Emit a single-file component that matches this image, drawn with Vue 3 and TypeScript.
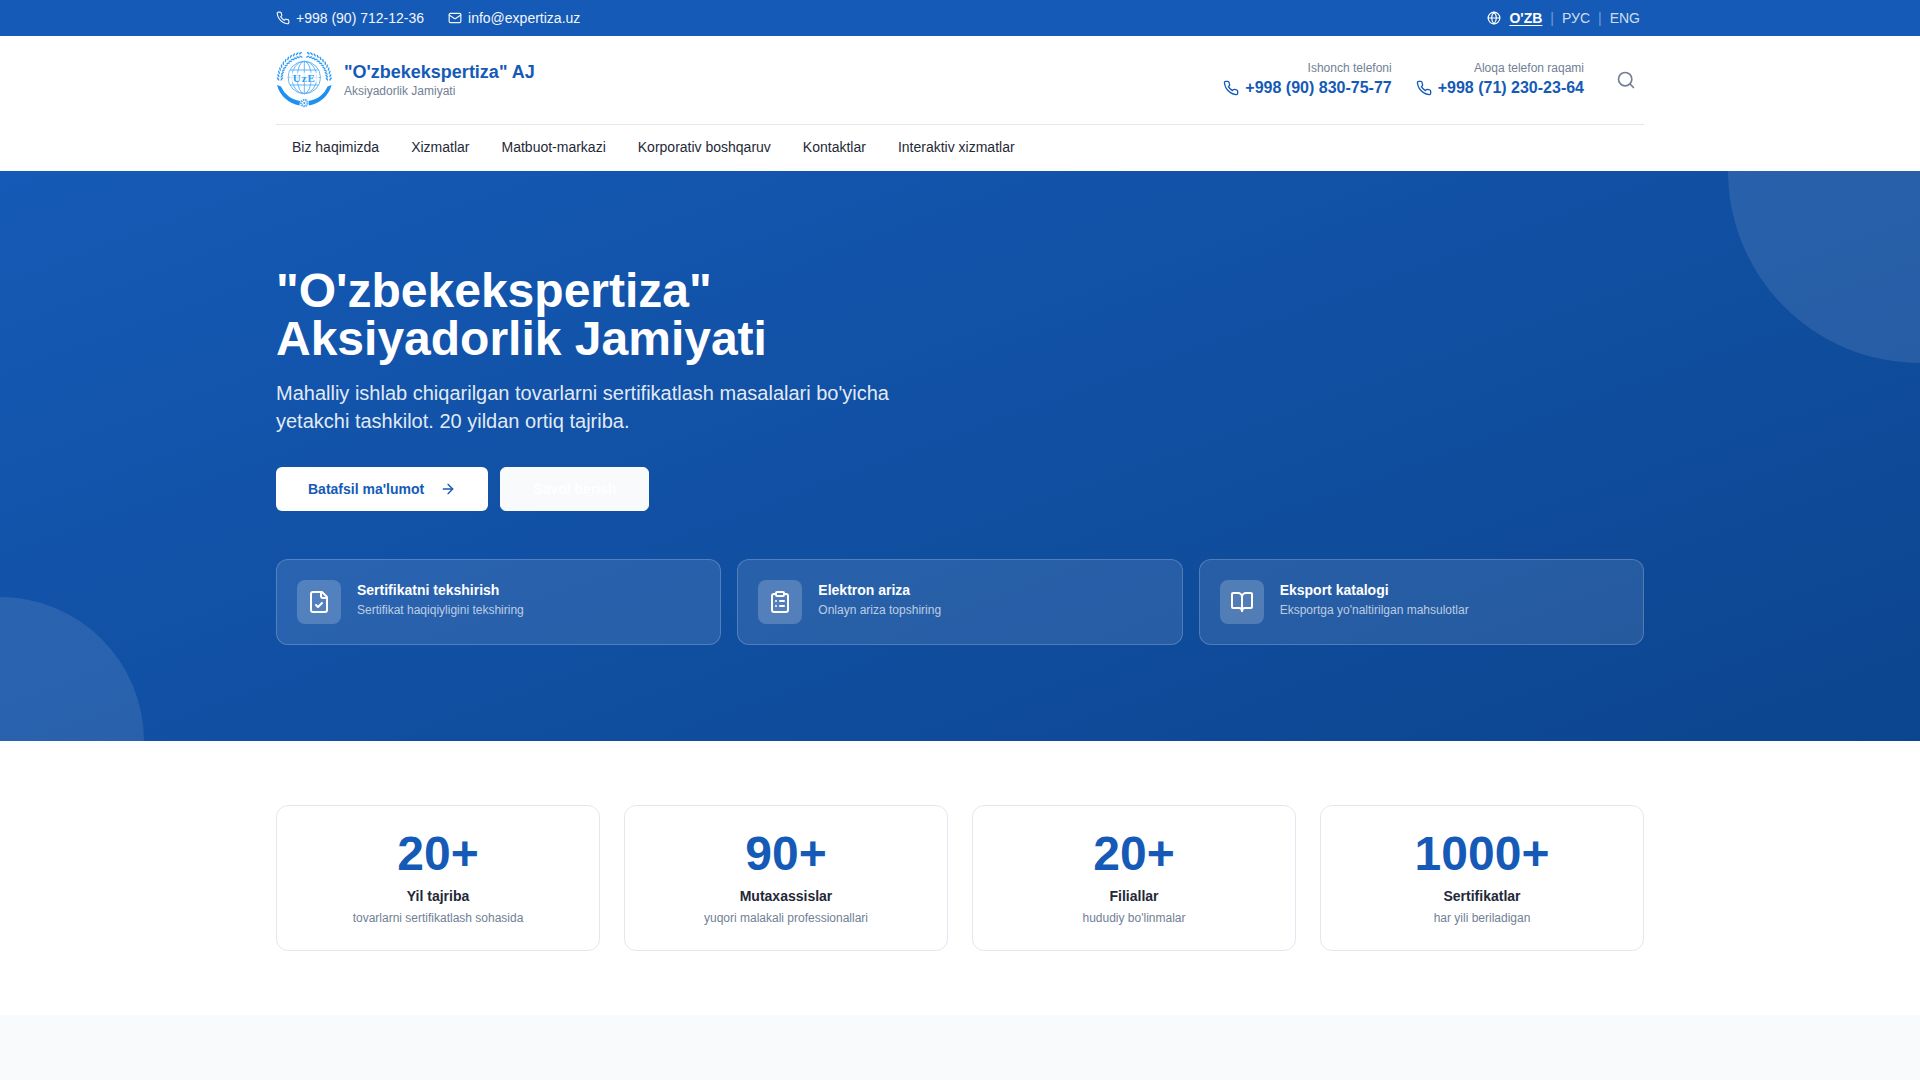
<template>
  <div class="topbar">
    <div class="container topbar__inner">
      <div class="topbar__contacts">
        <a class="topbar__link">
          <svg class="icon icon--sm" viewBox="0 0 24 24"><path :d="phonePath" /></svg>
          +998 (90) 712-12-36
        </a>
        <a class="topbar__link">
          <svg class="icon icon--sm" viewBox="0 0 24 24">
            <rect x="2" y="4" width="20" height="16" rx="2" />
            <path d="m22 7-8.97 5.7a1.94 1.94 0 0 1-2.06 0L2 7" />
          </svg>
          info@expertiza.uz
        </a>
      </div>
      <div class="lang">
        <svg class="icon icon--sm" viewBox="0 0 24 24">
          <circle cx="12" cy="12" r="10" />
          <path d="M12 2a14.5 14.5 0 0 0 0 20 14.5 14.5 0 0 0 0-20" />
          <path d="M2 12h20" />
        </svg>
        <button class="lang__btn lang__btn--active">O'ZB</button>
        <span class="lang__sep">|</span>
        <button class="lang__btn">РУС</button>
        <span class="lang__sep">|</span>
        <button class="lang__btn">ENG</button>
      </div>
    </div>
  </div>

  <header class="header">
    <div class="container">
      <div class="header__main">
        <div class="brand">
          <svg class="brand__logo" viewBox="0 0 56 56">
            <g fill="none" stroke="#55aef8" stroke-width="0.9">
              <circle cx="28.3" cy="25.5" r="16.2" />
              <ellipse cx="28.3" cy="25.5" rx="7" ry="16.2" />
              <ellipse cx="28.3" cy="25.5" rx="12.5" ry="16.2" />
              <path d="M28.3 9.3v32.4M14 18h28.6M14 33h28.6M12.5 25.5h31.6" />
            </g>
            <rect x="13.5" y="20.5" width="29.6" height="10" fill="#fff" opacity="0.75" />
            <text x="28.3" y="29.5" class="brand__mark">UzE</text>
            <path class="brand__arc" d="M1 33A28 28 0 0 0 23.5 53.5L24 49A23.5 23.5 0 0 1 5 34.5Z" />
            <path class="brand__arc" d="M55.6 33A28 28 0 0 1 33 53.5L32.6 49A23.5 23.5 0 0 0 51.6 34.5Z" />
            <g fill="#2f9bf5">
              <ellipse
                v-for="leaf in leaves"
                :key="leaf.id"
                :cx="leaf.x"
                :cy="leaf.y"
                rx="1.9"
                ry="0.75"
                :transform="`rotate(${leaf.angle} ${leaf.x} ${leaf.y})`"
              />
            </g>
            <circle cx="28.3" cy="51" r="3.2" fill="none" stroke="#5aaef5" stroke-width="2.2" stroke-dasharray="1.5 0.7" />
            <circle cx="28.3" cy="51" r="1" fill="#2f9bf5" />
          </svg>
          <div>
            <div class="brand__title">"O'zbekekspertiza" AJ</div>
            <div class="brand__sub">Aksiyadorlik Jamiyati</div>
          </div>
        </div>

        <div class="header__right">
          <div v-for="phone in phones" :key="phone.number" class="hotline">
            <div class="hotline__label">{{ phone.label }}</div>
            <div class="hotline__number">
              <svg class="icon" viewBox="0 0 24 24"><path :d="phonePath" /></svg>
              {{ phone.number }}
            </div>
          </div>
          <button class="search">
            <svg class="search__icon" viewBox="0 0 24 24">
              <circle cx="11" cy="11" r="8" />
              <path d="m21 21-4.3-4.3" />
            </svg>
          </button>
        </div>
      </div>

      <nav class="nav">
        <a v-for="item in navItems" :key="item" class="nav__item">{{ item }}</a>
      </nav>
    </div>
  </header>

  <section class="hero">
    <div class="hero__circle hero__circle--top"></div>
    <div class="hero__circle hero__circle--bottom"></div>
    <div class="container hero__inner">
      <div class="hero__text">
        <h1 class="hero__title">"O'zbekekspertiza" Aksiyadorlik Jamiyati</h1>
        <p class="hero__sub">Mahalliy ishlab chiqarilgan tovarlarni sertifikatlash masalalari bo'yicha yetakchi tashkilot. 20 yildan ortiq tajriba.</p>
        <div class="hero__buttons">
          <button class="btn btn--primary">
            Batafsil ma'lumot
            <svg class="icon" viewBox="0 0 24 24">
              <path d="M5 12h14" />
              <path d="m12 5 7 7-7 7" />
            </svg>
          </button>
          <button class="btn btn--ghost">Savol berish</button>
        </div>
      </div>

      <div class="hero__cards">
        <a v-for="card in cards" :key="card.title" class="service">
          <div class="service__icon">
            <svg viewBox="0 0 24 24">
              <rect v-if="card.rect" x="8" y="2" width="8" height="4" rx="1" />
              <path v-for="d in card.paths" :key="d" :d="d" />
            </svg>
          </div>
          <div>
            <div class="service__title">{{ card.title }}</div>
            <div class="service__sub">{{ card.sub }}</div>
          </div>
        </a>
      </div>
    </div>
  </section>

  <section class="stats">
    <div class="container stats__grid">
      <div v-for="stat in stats" :key="stat.label" class="stat">
        <div class="stat__value">{{ stat.value }}</div>
        <div class="stat__label">{{ stat.label }}</div>
        <div class="stat__desc">{{ stat.desc }}</div>
      </div>
    </div>
  </section>
</template>

<script setup lang="ts">
type ServiceCard = {
  title: string
  sub: string
  rect?: boolean
  paths: string[]
}

const phonePath =
  'M22 16.92v3a2 2 0 0 1-2.18 2 19.79 19.79 0 0 1-8.63-3.07 19.5 19.5 0 0 1-6-6 19.79 19.79 0 0 1-3.07-8.67A2 2 0 0 1 4.11 2h3a2 2 0 0 1 2 1.72 12.84 12.84 0 0 0 .7 2.81 2 2 0 0 1-.45 2.11L8.09 9.91a16 16 0 0 0 6 6l1.27-1.27a2 2 0 0 1 2.11-.45 12.84 12.84 0 0 0 2.81.7A2 2 0 0 1 22 16.92z'

const phones = [
  { label: 'Ishonch telefoni', number: '+998 (90) 830-75-77' },
  { label: 'Aloqa telefon raqami', number: '+998 (71) 230-23-64' },
]

const navItems = ['Biz haqimizda', 'Xizmatlar', 'Matbuot-markazi', 'Korporativ boshqaruv', 'Kontaktlar', 'Interaktiv xizmatlar']

const cards: ServiceCard[] = [
  {
    title: 'Sertifikatni tekshirish',
    sub: 'Sertifikat haqiqiyligini tekshiring',
    paths: ['M15 2H6a2 2 0 0 0-2 2v16a2 2 0 0 0 2 2h12a2 2 0 0 0 2-2V7Z', 'M14 2v4a2 2 0 0 0 2 2h4', 'm9 15 2 2 4-4'],
  },
  {
    title: 'Elektron ariza',
    sub: 'Onlayn ariza topshiring',
    rect: true,
    paths: ['M16 4h2a2 2 0 0 1 2 2v14a2 2 0 0 1-2 2H6a2 2 0 0 1-2-2V6a2 2 0 0 1 2-2h2', 'M12 11h4', 'M12 16h4', 'M8 11h.01', 'M8 16h.01'],
  },
  {
    title: 'Eksport katalogi',
    sub: "Eksportga yo'naltirilgan mahsulotlar",
    paths: ['M12 7v14', 'M3 18a1 1 0 0 1-1-1V4a1 1 0 0 1 1-1h5a4 4 0 0 1 4 4 4 4 0 0 1 4-4h5a1 1 0 0 1 1 1v13a1 1 0 0 1-1 1h-6a3 3 0 0 0-3 3 3 3 0 0 0-3-3z'],
  },
]

const stats = [
  { value: '20+', label: 'Yil tajriba', desc: 'tovarlarni sertifikatlash sohasida' },
  { value: '90+', label: 'Mutaxassislar', desc: 'yuqori malakali professionallari' },
  { value: '20+', label: 'Filiallar', desc: "hududiy bo'linmalar" },
  { value: '1000+', label: 'Sertifikatlar', desc: 'har yili beriladigan' },
]

// laurel leaves round the globe, two rows on each side of the logo
const leaves: { id: number; x: number; y: number; angle: number }[] = []
for (let i = 0; i < 12; i++) {
  const step = 180 + i * 7.4
  for (const [side, radius] of [[1, 26.2], [1, 22.6], [-1, 26.2], [-1, 22.6]]) {
    const deg = side === 1 ? step : 540 - step
    const rad = (deg * Math.PI) / 180
    leaves.push({
      id: leaves.length,
      x: +(28.3 + radius * Math.cos(rad)).toFixed(2),
      y: +(27 + radius * Math.sin(rad)).toFixed(2),
      angle: deg + (radius > 25 ? 55 : -55) * side,
    })
  }
}
</script>

<style>
body {
  background: #f8fafc;
}
</style>

<style scoped>
* {
  box-sizing: border-box;
}

.container {
  width: 1400px;
  margin: 0 auto;
  padding: 0 16px;
  font-family: "Liberation Sans", Arial, sans-serif;
}

.icon {
  width: 16px;
  height: 16px;
  flex-shrink: 0;
  fill: none;
  stroke: currentColor;
  stroke-width: 2;
  stroke-linecap: round;
  stroke-linejoin: round;
}

.icon--sm {
  width: 14px;
  height: 14px;
}

.topbar {
  background: #155ab6;
  color: #fff;
}

.topbar__inner {
  height: 36px;
  display: flex;
  align-items: center;
  justify-content: space-between;
  font-size: 14px;
}

.topbar__contacts {
  display: flex;
  gap: 24px;
}

.topbar__link {
  display: flex;
  align-items: center;
  gap: 6px;
  opacity: 0.95;
}

.lang {
  display: flex;
  align-items: center;
  gap: 4px;
}

.lang__btn {
  padding: 0 4px;
  border: 0;
  background: none;
  font: inherit;
  color: rgba(255, 255, 255, 0.8);
}

.lang__btn--active {
  color: #fff;
  font-weight: 700;
  text-decoration: underline;
  text-underline-offset: 2px;
}

.lang__sep {
  color: rgba(255, 255, 255, 0.4);
}

.header {
  background: #fff;
}

.header__main {
  height: 89px;
  display: flex;
  align-items: center;
  justify-content: space-between;
  border-bottom: 1px solid #e2e8f0;
}

.brand {
  display: flex;
  align-items: center;
  gap: 12px;
}

.brand__logo {
  width: 56px;
  height: 56px;
}

.brand__mark {
  font-family: "Liberation Serif", serif;
  font-size: 11px;
  font-weight: 700;
  letter-spacing: 1px;
  fill: #2f9bf5;
  text-anchor: middle;
}

.brand__arc {
  fill: #1e90f0;
}

.brand__title {
  font-size: 18px;
  line-height: 22.5px;
  font-weight: 700;
  color: #155ab6;
}

.brand__sub {
  font-size: 12px;
  line-height: 16px;
  color: #718096;
}

.header__right {
  display: flex;
  align-items: center;
  gap: 24px;
}

.hotline {
  text-align: right;
}

.hotline__label {
  font-size: 12px;
  line-height: 16px;
  color: #718096;
}

.hotline__number {
  display: flex;
  align-items: center;
  gap: 6px;
  font-size: 16px;
  line-height: 24px;
  font-weight: 700;
  color: #155ab6;
}

.search {
  width: 36px;
  height: 36px;
  padding: 8px;
  border: 0;
  background: none;
}

.search__icon {
  display: block;
  width: 20px;
  height: 20px;
  fill: none;
  stroke: #718096;
  stroke-width: 2;
  stroke-linecap: round;
  stroke-linejoin: round;
}

.nav {
  display: flex;
}

.nav__item {
  padding: 12px 16px 14px;
  font-size: 14px;
  line-height: 20px;
  color: #1f2937;
}

.hero {
  position: relative;
  overflow: hidden;
  background: linear-gradient(160deg, #155ab6 0%, #0c458f 100%);
  color: #fff;
}

.hero__circle {
  position: absolute;
  border-radius: 50%;
  background: rgba(255, 255, 255, 0.1);
}

.hero__circle--top {
  width: 384px;
  height: 384px;
  top: -192px;
  right: -192px;
}

.hero__circle--bottom {
  width: 288px;
  height: 288px;
  bottom: -144px;
  left: -144px;
}

.hero__inner {
  position: relative;
  padding-top: 96px;
  padding-bottom: 96px;
}

.hero__text {
  width: 672px;
}

.hero__title {
  margin: 0 0 16px;
  font-size: 48px;
  line-height: 48px;
  font-weight: 700;
}

.hero__sub {
  margin: 0 0 32px;
  font-size: 20px;
  line-height: 28px;
  color: rgba(255, 255, 255, 0.9);
}

.hero__buttons {
  display: flex;
  gap: 12px;
  margin-bottom: 48px;
}

.btn {
  height: 44px;
  padding: 0 32px;
  display: flex;
  align-items: center;
  gap: 16px;
  border-radius: 6px;
  font: inherit;
  font-size: 14px;
  font-weight: 700;
}

.btn--primary {
  border: 0;
  background: #fff;
  color: #155ab6;
}

.btn--ghost {
  border: 1px solid #f8fafc;
  background: #f8fafc;
  color: #fff;
}

.hero__cards {
  display: grid;
  grid-template-columns: repeat(3, 1fr);
  gap: 16px;
}

.service {
  display: flex;
  gap: 16px;
  padding: 20px;
  border: 1px solid rgba(255, 255, 255, 0.2);
  border-radius: 12px;
  background: rgba(255, 255, 255, 0.1);
}

.service__icon {
  width: 44px;
  height: 44px;
  flex-shrink: 0;
  display: flex;
  align-items: center;
  justify-content: center;
  border-radius: 8px;
  background: rgba(255, 255, 255, 0.2);
}

.service__icon svg {
  width: 24px;
  height: 24px;
  fill: none;
  stroke: #fff;
  stroke-width: 2;
  stroke-linecap: round;
  stroke-linejoin: round;
}

.service__title {
  font-size: 14px;
  line-height: 20px;
  font-weight: 700;
}

.service__sub {
  margin-top: 2px;
  font-size: 12px;
  line-height: 16px;
  color: rgba(255, 255, 255, 0.7);
}

.stats {
  padding: 64px 0;
  background: #fff;
}

.stats__grid {
  display: grid;
  grid-template-columns: repeat(4, 1fr);
  gap: 24px;
}

.stat {
  padding: 24px;
  border: 1px solid #e2e8f0;
  border-radius: 12px;
  text-align: center;
}

.stat__value {
  margin-bottom: 8px;
  font-size: 48px;
  line-height: 48px;
  font-weight: 700;
  color: #155ab6;
}

.stat__label {
  font-size: 14px;
  line-height: 20px;
  font-weight: 700;
  color: #1f2937;
}

.stat__desc {
  margin-top: 4px;
  font-size: 12px;
  line-height: 16px;
  color: #718096;
}
</style>
